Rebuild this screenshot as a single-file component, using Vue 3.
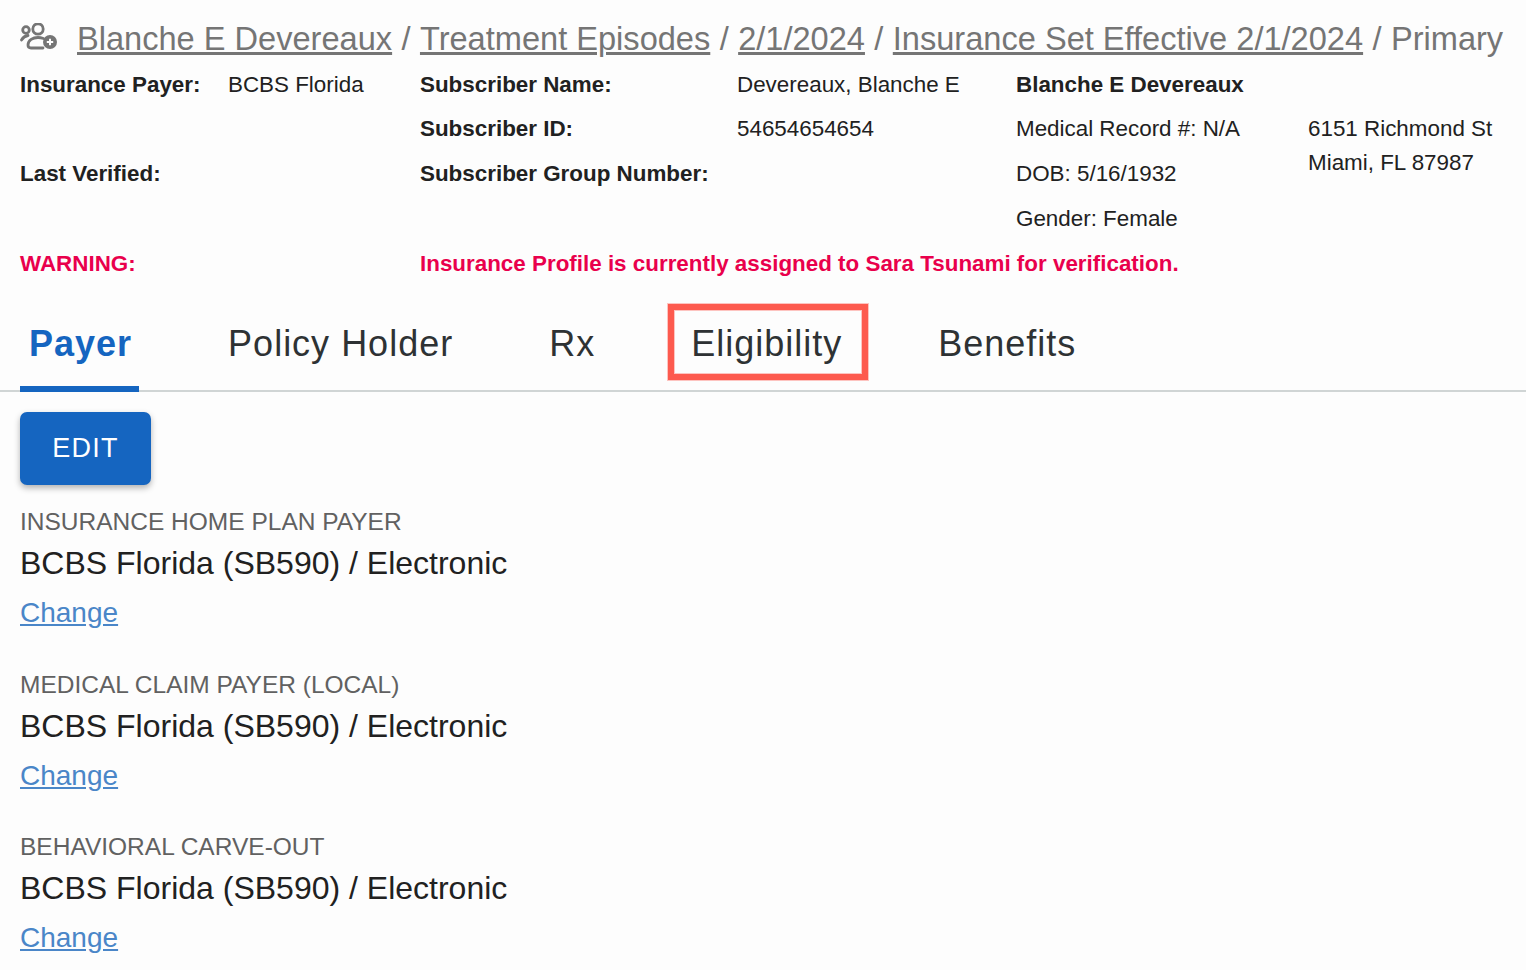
<script setup>
const tabs = [
  { label: 'Payer', active: true },
  { label: 'Policy Holder' },
  { label: 'Rx' },
  { label: 'Eligibility', marked: true },
  { label: 'Benefits' }
]

const payers = [
  { title: 'INSURANCE HOME PLAN PAYER', value: 'BCBS Florida (SB590) / Electronic' },
  { title: 'MEDICAL CLAIM PAYER (LOCAL)', value: 'BCBS Florida (SB590) / Electronic' },
  { title: 'BEHAVIORAL CARVE-OUT', value: 'BCBS Florida (SB590) / Electronic' }
]
</script>

<template>
  <div class="page">
    <div class="crumbs">
      <svg class="crumb-icon" viewBox="0 0 38 30" width="38" height="30" fill="none" stroke="#757575" stroke-width="2.8" stroke-linecap="round">
        <circle cx="6" cy="7" r="3.3" />
        <circle cx="18" cy="6" r="5.2" />
        <path d="M1.5 17 C3 14.5 5.5 12.8 8 12.5" />
        <path d="M23 25 H11 C9 25 8 24 8 22 C8 17 13 14.5 18 14.5 C20 14.5 22 15 23.5 15.5" />
        <circle cx="30" cy="19" r="7" fill="#757575" stroke="none" />
        <path d="M30 15.8 V22.2 M26.8 19 H33.2" stroke="#fdfdfd" stroke-width="2" stroke-linecap="butt" />
      </svg>
      <a class="crumb-link">Blanche E Devereaux</a>
      <span class="sep">/</span>
      <a class="crumb-link">Treatment Episodes</a>
      <span class="sep">/</span>
      <a class="crumb-link">2/1/2024</a>
      <span class="sep">/</span>
      <a class="crumb-link">Insurance Set Effective 2/1/2024</a>
      <span class="sep">/</span>
      <span>Primary</span>
    </div>

    <div class="info">
      <div class="cell"><b>Insurance Payer:</b></div>
      <div class="cell">BCBS Florida</div>
      <div class="cell"><b>Subscriber Name:</b></div>
      <div class="cell">Devereaux, Blanche E</div>
      <div class="cell wide"><b>Blanche E Devereaux</b></div>

      <div class="cell"></div>
      <div class="cell"></div>
      <div class="cell"><b>Subscriber ID:</b></div>
      <div class="cell">54654654654</div>
      <div class="cell">Medical Record #: N/A</div>
      <div class="address">6151 Richmond St<br />Miami, FL 87987</div>

      <div class="cell"><b>Last Verified:</b></div>
      <div class="cell"></div>
      <div class="cell"><b>Subscriber Group Number:</b></div>
      <div class="cell"></div>
      <div class="cell">DOB: 5/16/1932</div>

      <div class="cell"></div>
      <div class="cell"></div>
      <div class="cell"></div>
      <div class="cell"></div>
      <div class="cell wide">Gender: Female</div>

      <div class="cell warn">WARNING:</div>
      <div class="cell"></div>
      <div class="cell warn warn-msg">Insurance Profile is currently assigned to Sara Tsunami for verification.</div>
    </div>

    <div class="tabs">
      <div
        v-for="tab in tabs"
        :key="tab.label"
        class="tab"
        :class="{ active: tab.active, marked: tab.marked }"
      >
        {{ tab.label }}
      </div>
    </div>

    <div class="content">
      <button class="edit-btn">EDIT</button>
      <div v-for="(p, i) in payers" :key="i" class="payer">
        <div class="payer-title">{{ p.title }}</div>
        <div class="payer-value">{{ p.value }}</div>
        <a class="change">Change</a>
      </div>
    </div>
  </div>
</template>

<style>
html, body {
  background: #fdfdfd;
  overflow: hidden;
}
</style>

<style scoped>
.page {
  width: 1526px;
  height: 970px;
  overflow: hidden;
  font-family: "Liberation Sans", Arial, sans-serif;
  color: #212121;
  background: #fdfdfd;
}

.crumbs {
  display: flex;
  align-items: center;
  height: 36px;
  padding-top: 21px;
  padding-left: 20px;
  font-size: 32.6px;
  color: #757575;
  white-space: nowrap;
}

.crumb-icon {
  margin-right: 19px;
  margin-top: -2px;
  flex: none;
}

.crumb-link {
  text-decoration: underline;
}

.sep {
  margin: 0 9.4px;
}

.info {
  display: grid;
  grid-template-columns: 208px 192px 317px 279px 292px 1fr;
  grid-template-rows: 44px repeat(4, 45px);
  margin-top: 5px;
  padding-left: 20px;
  font-size: 22.4px;
  line-height: 45px;
  white-space: nowrap;
}

.cell {
  min-width: 0;
}

.wide {
  grid-column-end: span 2;
}

.address {
  grid-column: 6;
  grid-row: 2 / span 2;
  line-height: 34px;
  padding-top: 6px;
}

.warn {
  color: #e9004c;
  font-weight: 700;
}

.warn-msg {
  grid-column: 3 / -1;
}

.tabs {
  display: flex;
  height: 72px;
  margin-top: 22px;
  padding-bottom: 10px;
  border-bottom: 2px solid #d0d5d5;
}

.tab {
  position: relative;
  display: flex;
  align-items: center;
  margin-left: 20px;
  padding: 0 7px 0 9px;
  font-size: 36px;
  letter-spacing: 1px;
  color: #2e3234;
}

.tab + .tab {
  margin-left: 80px;
}

.tab.active {
  font-weight: 700;
  color: #1565c0;
}

.tab.active::after {
  content: "";
  position: absolute;
  left: 0;
  right: 0;
  bottom: -12px;
  height: 6px;
  background: #1565c0;
}

.tab.marked::before {
  content: "";
  position: absolute;
  left: -14px;
  right: -19px;
  top: -4px;
  height: 76px;
  box-sizing: border-box;
  border: 6px solid #fd5a4e;
  box-shadow: 0 0 0 1px rgba(253, 90, 78, 0.35), inset 0 0 0 1px rgba(253, 90, 78, 0.35);
}

.content {
  padding: 20px 20px 0;
}

.edit-btn {
  display: block;
  width: 131px;
  height: 73px;
  border: none;
  border-radius: 7px;
  background: #1565c0;
  color: #fff;
  font-family: inherit;
  font-size: 27px;
  letter-spacing: 1.2px;
  box-shadow: 0 3px 6px rgba(0, 0, 0, 0.3);
}

.payer {
  margin-top: 21px;
}

.payer + .payer {
  margin-top: 31.5px;
}

.payer-title {
  font-size: 24.5px;
  line-height: 32px;
  color: #616161;
}

.payer-value {
  font-size: 32px;
  line-height: 50px;
  color: #212121;
}

.change {
  display: block;
  font-size: 28px;
  line-height: 48px;
  padding-top: 1px;
  color: #4a86c8;
  text-decoration: underline;
}
</style>
